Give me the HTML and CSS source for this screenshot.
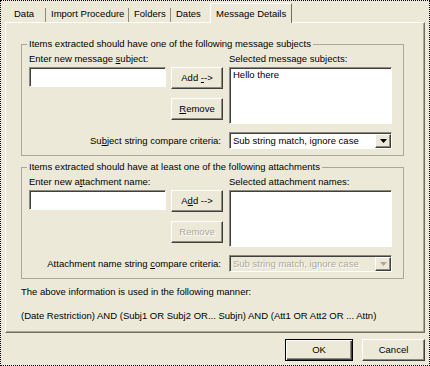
FILE: index.html
```html
<!DOCTYPE html>
<html>
<head>
<meta charset="utf-8">
<title>Message Details</title>
<link rel="stylesheet" href="styles.css">
</head>
<body>
<div class="dialog">
  <div class="tabs">
    <div class="tab t-data">Data</div>
    <div class="tab t-import">Import Procedure</div>
    <div class="tab t-folders">Folders</div>
    <div class="tab t-dates">Dates</div>
    <div class="tab active">Message Details</div>
  </div>
  <div class="panel">
    <fieldset class="group">
      <legend>Items extracted should have one of the following message subjects</legend>
      <div class="grid">
        <div class="lbl">Enter new message <u>s</u>ubject:</div>
        <div class="lbl"></div>
        <div class="lbl">Selected message subjects:</div>
        <div class="edit"></div>
        <div class="btns">
          <div class="btn">Add <u>-</u>-&gt;</div>
          <div class="btn"><u>R</u>emove</div>
        </div>
        <div class="list"><div class="item">Hello there</div></div>
        <div class="crit-lbl">Su<u>b</u>ject string compare criteria:</div>
        <div class="combo">
          <span class="combo-text">Sub string match, ignore case</span>
          <span class="drop"><svg width="7" height="4" viewBox="0 0 7 4"><polygon points="0,0 7,0 3.5,4" fill="#000"/></svg></span>
        </div>
      </div>
    </fieldset>
    <fieldset class="group group2">
      <legend>Items extracted should have at least one of the following attachments</legend>
      <div class="grid">
        <div class="lbl">Enter new a<u>t</u>tachment name:</div>
        <div class="lbl"></div>
        <div class="lbl">Selected attachment names:</div>
        <div class="edit"></div>
        <div class="btns">
          <div class="btn">A<u>d</u>d --&gt;</div>
          <div class="btn disabled">Remove</div>
        </div>
        <div class="list"></div>
        <div class="crit-lbl">Attachment name string <u>c</u>ompare criteria:</div>
        <div class="combo disabled">
          <span class="combo-text">Sub string match, ignore case</span>
          <span class="drop"><svg width="7" height="4" viewBox="0 0 7 4"><polygon points="0,0 7,0 3.5,4" fill="#ACA899"/></svg></span>
        </div>
      </div>
    </fieldset>
    <p class="note first">The above information is used in the following manner:</p>
    <p class="note">(Date Restriction) AND (Subj1 OR Subj2 OR... Subjn) AND (Att1 OR Att2 OR ... Attn)</p>
  </div>
  <div class="footer">
    <div class="btn default">OK</div>
    <div class="btn cancel">Cancel</div>
  </div>
</div>
</body>
</html>
```

FILE: styles.css
```css
* { box-sizing: border-box; }

html, body {
  margin: 0;
  padding: 0;
}

body {
  background: #ECE9D8;
  font-family: "Liberation Sans", Arial, sans-serif;
  font-size: 9.5px;
  line-height: 12px;
  color: #000;
}

.dialog {
  width: 430px;
  height: 366px;
  border: 1px dotted #000;
  background: #ECE9D8;
}

/* Tabs */
.tabs {
  display: flex;
  align-items: flex-end;
  height: 21px;
  padding-left: 7px;
}

.tab {
  height: 14px;
  padding-left: 5px;
  border-right: 1px solid #8C8A7C;
  white-space: nowrap;
}

.t-data { width: 38px; padding-left: 6px; }
.t-import { width: 83px; }
.t-folders { width: 42px; }
.t-dates { width: 39px; border-right: none; }

.tab.active {
  position: relative;
  z-index: 1;
  width: 82px;
  height: 20px;
  margin-bottom: -1px;
  padding-top: 4px;
  background: #ECE9D8;
  border-top: 1px solid #fff;
  border-left: 1px solid #fff;
  border-right: 1px solid #716F64;
}

/* Panel */
.panel {
  margin-left: 4px;
  width: 420px;
  height: 311px;
  padding: 15px 20px 0 15px;
  border-top: 1px solid #fff;
  border-left: 1px solid #fff;
  border-right: 1px solid #716F64;
  border-bottom: 1px solid #716F64;
  box-shadow: inset -1px -1px 0 #ACA899;
}

.group {
  margin: 0;
  min-width: 0;
  padding: 3px 11px 6px 7px;
  border: 1px solid #ACA899;
}

.group2 { margin-top: 5px; }

.group legend {
  padding: 0 2px;
  margin-left: -2px;
  line-height: 12px;
}

.grid {
  display: grid;
  grid-template-columns: 142px 58px 163px;
}

.lbl {
  height: 12px;
  margin-bottom: 2px;
  white-space: nowrap;
}

.edit {
  width: 137px;
  height: 20px;
  background: #fff;
  border: 1px solid;
  border-color: #8C8A7C #fff #fff #8C8A7C;
  box-shadow: inset 1px 1px 0 #404040;
}

.btns {
  display: flex;
  flex-direction: column;
  gap: 9px;
}

.btn {
  width: 52px;
  height: 22px;
  line-height: 20px;
  text-align: center;
  border: 1px solid;
  border-color: #fff #404040 #404040 #fff;
  box-shadow: inset -1px -1px 0 #8C8A7C;
  background: #ECE9D8;
  white-space: nowrap;
}

.btn.disabled {
  color: #ACA899;
  text-shadow: 1px 1px 0 #fff;
}

.list {
  height: 57px;
  background: #fff;
  border: 1px solid;
  border-color: #8C8A7C #fff #fff #8C8A7C;
  box-shadow: inset 1px 1px 0 #404040;
  padding: 1px 2px;
}

.item { padding-left: 1px; }

.crit-lbl {
  grid-column: 1 / span 2;
  align-self: center;
  margin-top: 8px;
  padding-right: 8px;
  text-align: right;
  white-space: nowrap;
}

.combo {
  margin-top: 8px;
  height: 17px;
  display: flex;
  align-items: center;
  background: #fff;
  border: 1px solid;
  border-color: #8C8A7C #fff #fff #8C8A7C;
  box-shadow: inset 1px 1px 0 #404040;
  padding: 1px 0 1px 1px;
}

.combo-text {
  flex: 1;
  padding-left: 2px;
  white-space: nowrap;
}

.drop {
  width: 16px;
  height: 14px;
  display: flex;
  align-items: center;
  justify-content: center;
  background: #ECE9D8;
  border: 1px solid;
  border-color: #fff #404040 #404040 #fff;
  box-shadow: inset -1px -1px 0 #8C8A7C;
}

.combo.disabled {
  background: #ECE9D8;
  color: #ACA899;
}

.combo.disabled .combo-text { text-shadow: 1px 1px 0 #fff; }

.note {
  margin: 12px 0 0 0;
  white-space: nowrap;
}

.note.first { margin-top: 7px; }

/* Footer */
.footer {
  display: flex;
  justify-content: flex-end;
  gap: 9px;
  margin-top: 6px;
  padding-right: 4px;
}

.btn.default {
  width: 68px;
  border: 1px solid #000;
  box-shadow: inset 1px 1px 0 #fff, inset -1px -1px 0 #404040, inset -2px -2px 0 #8C8A7C;
}

.btn.cancel { width: 63px; }
```
